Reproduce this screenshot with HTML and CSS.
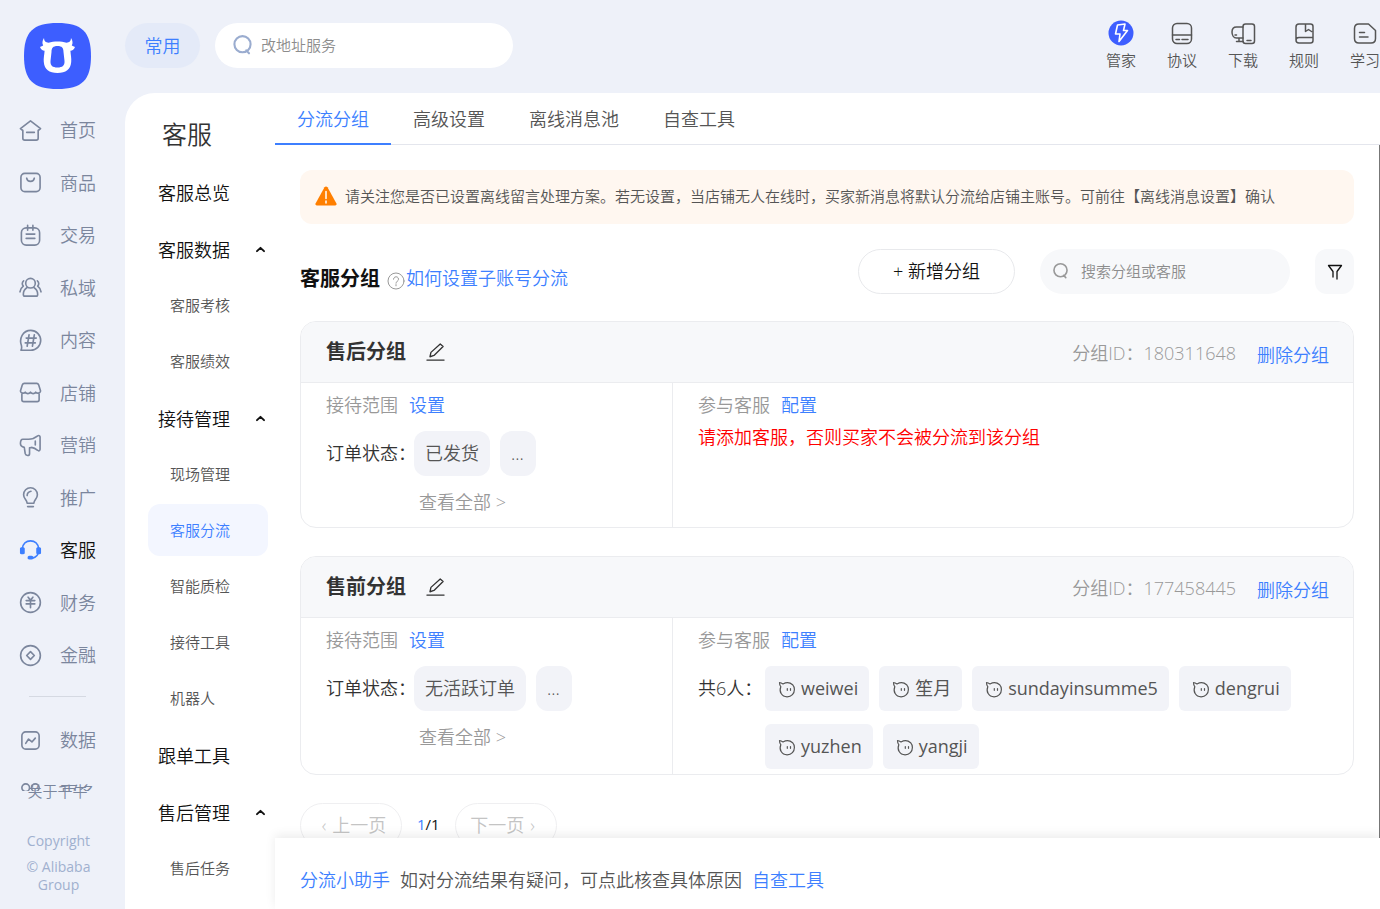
FILE: index.html
```html
<!DOCTYPE html>
<html lang="zh-CN">
<head>
<meta charset="utf-8">
<meta name="viewport" content="width=device-width, initial-scale=1">
<title>客服分流</title>
<link rel="stylesheet" href="styles.css">
</head>
<body>
<svg class="sprite" aria-hidden="true">
  <symbol id="search" viewBox="0 0 20 20"><path d="M10 2a7.6 7.6 0 1 0 0 15.4A7.6 7.6 0 1 0 10 2zM13.6 15.6l2.6 2.8"/></symbol>
  <symbol id="edit" viewBox="0 0 20 20"><path d="M1 18.5h18M4.2 15l1-4.6L15 1.600l3 2.700L8.400 13.600z"/></symbol>
  <symbol id="face" viewBox="0 0 18 18"><path d="M5 3.900C3.800 3.100 2.600 2.600 1.500 2.500c0 1.600.4 3 1.300 4.200-2 4.800.8 10.100 6.300 10.100 4.500 0 7.300-3.300 7.300-7.200 0-2-.7-3.700-1.800-4.900C12 2.300 8 2.200 5 3.900zM9.300 8.500v1.800M12.500 8.500v1.800"/></symbol>
  <symbol id="caret" viewBox="0 0 10 8"><path d="M1.800 5.500 5 2.500l3.200 3"/></symbol>
</svg>
<div class="app">
  <aside class="sidebar">
    <a class="logo" href="#" aria-label="千牛">
      <svg viewBox="0 0 67 66"><path class="logo-bg" d="M33.500 0C58 0 67 9 67 33S58 66 33.500 66 0 57 0 33 9 0 33.500 0z"/><path class="logo-ox" fill-rule="evenodd" d="M20 15c0 3 1.500 4.500 4.500 4.800C30 18 37 18 42.500 19.800 45.500 19.500 47 18 47 15c1.800 2.500 2 5.500.8 7.500L51 24c-.8 2.300-2.500 3.600-4.600 3.700.3 4 1.200 7.300.8 11.300C46.500 46.500 42 50 33.500 50S20.500 46.500 19.800 39c-.4-4 .5-7.300.8-11.300-2.100-.1-3.800-1.400-4.600-3.700l3.200-1.500C18 20.500 18.200 17.500 20 15zM33.500 23c-4.500 0-6 2-6 6l-1 9c-.3 4.500 2 6.500 7 6.500s7.300-2 7-6.500l-1-9c0-4-1.500-6-6-6z"/></svg>
    </a>
    <nav class="nav" aria-label="主导航">
      <a class="nav-item" href="#"><svg class="nav-icon" viewBox="0 0 24 24"><path d="M1.500 10 12 2l10.500 8-2.500 2v8a2 2 0 0 1-2 2H6a2 2 0 0 1-2-2v-8zM8 14h8"/></svg>首页</a>
      <a class="nav-item" href="#"><svg class="nav-icon" viewBox="0 0 24 24"><rect x="2" y="2.500" width="20" height="19" rx="4"/><path d="M8 7.500c.8 4.500 7.200 4.500 8 0"/></svg>商品</a>
      <a class="nav-item" href="#"><svg class="nav-icon" viewBox="0 0 24 24"><rect x="2.500" y="4" width="19" height="18" rx="5"/><path d="M9 1.500v5M14.500 1.500v5M7.500 10.500h9M7.500 15h9"/></svg>交易</a>
      <a class="nav-item" href="#"><svg class="nav-icon" viewBox="0 0 24 24"><circle cx="12" cy="7.500" r="5"/><path d="M8.500 12c-2.500 1.500-4 4-4 7.200 0 1 .6 1.800 1.800 1.800h11.400c1.200 0 1.800-.8 1.800-1.800 0-3.200-1.500-5.700-4-7.200M4.800 5c-1.800 1.500-1.800 4-.3 5.500C2.500 12 1.200 14 1 16.500M19.200 5c1.800 1.500 1.800 4 .3 5.500 2 1.500 3.300 3.500 3.500 6"/></svg>私域</a>
      <a class="nav-item" href="#"><svg class="nav-icon" viewBox="0 0 24 24"><path d="M12.300 1.500a10.300 10.300 0 1 1 0 20.700H2c1-1.500 1-2.500.6-4.700C-.3 10 4 1.500 12.300 1.500zM10.500 6 8.500 18M16 6l-2 12M7.500 9.500H18M6.500 14.500H17"/></svg>内容</a>
      <a class="nav-item" href="#"><svg class="nav-icon" viewBox="0 0 24 24"><path d="M5.500 2.500h13c1 0 1.600.5 2 1.500l2 6.500c-.5 2.500-3.500 2.800-5 1.200-1.500 2-4 2-5.500 0-1.500 2-4 2-5.500 0-1.500 1.600-4.500 1.300-5-1.200l2-6.500c.4-1 1-1.500 2-1.500zM3 12.500v7c0 1.500.7 2 2 2h14c1.300 0 2-.5 2-2v-7"/></svg>店铺</a>
      <a class="nav-item" href="#"><svg class="nav-icon" viewBox="0 0 24 24"><path d="M4 5.500h6c4 0 7-1.500 9.500-3.500 1-.8 2.500-.3 2.500 1v13c0 1.500-1.500 2-2.500 1-2-1.500-4-2.500-6.500-3l-2 .5v6c0 2.500-4 2.500-4.500 0l-1-6.500C3 13.500 1.500 12 1.500 10S2 5.500 4 5.500zM17 7.500v4"/></svg>营销</a>
      <a class="nav-item" href="#"><svg class="nav-icon" viewBox="0 0 24 24"><path d="M8.500 18c0-3.500-3.700-4.500-3.700-9a7.200 7.200 0 0 1 14.400 0c0 4.500-3.700 5.500-3.700 9zM8.500 10c0-2.500 1.500-4 4-4.500M9 21.500h6"/></svg>推广</a>
      <a class="nav-item is-active" href="#" aria-current="page"><svg class="nav-icon" viewBox="0 0 24 24"><path d="M3.500 10C4 5 7.500 2 12 2s8 3 8.500 8v3c-.5 4-3 6.300-6.500 7"/><path class="solid" d="M1 10c0-2 5-2 5 0v4.500c0 2-5 2-5 0zM18 10c0-2 5-2 5 0v4.500c0 2-5 2-5 0zM9 19c0-2 6-2 6 0v1c0 2-6 2-6 0z"/></svg>客服</a>
      <a class="nav-item" href="#"><svg class="nav-icon" viewBox="0 0 24 24"><circle cx="12" cy="12" r="10.300"/><path d="m9.500 6.500 2.500 3 2.500-3M7.500 10h9M7.500 13.500h9M12 10v7.500"/></svg>财务</a>
      <a class="nav-item" href="#"><svg class="nav-icon" viewBox="0 0 24 24"><circle cx="12" cy="12" r="10.300"/><path d="m12 8 4 4-4 4-4-4z"/></svg>金融</a>
      <hr class="nav-divider">
      <a class="nav-item" href="#"><svg class="nav-icon" viewBox="0 0 24 24"><rect x="3" y="3" width="18" height="18" rx="4"/><path d="m7 15 3-4.500 3.500 3L17 9.500"/></svg>数据</a>
      <a class="nav-item" href="#"><svg class="nav-icon" viewBox="0 0 24 24"><circle cx="7" cy="7" r="4"/><circle cx="17" cy="7" r="4"/><circle cx="7" cy="17" r="4"/><circle cx="17" cy="17" r="4"/></svg>更多</a>
    </nav>
    <footer class="side-foot">
      <a class="about" href="#">关于千牛</a>
      <p class="copy">Copyright</p>
      <p class="copy">© Alibaba Group</p>
    </footer>
  </aside>

  <header class="topbar">
    <button class="common" type="button">常用</button>
    <label class="search search-top"><svg class="search-icon"><use href="#search"/></svg><input type="text" placeholder="改地址服务" aria-label="搜索服务"></label>
    <nav class="tools" aria-label="工具">
      <a class="tool" href="#"><svg class="tool-icon" viewBox="0 0 26 26"><circle class="disc" cx="13" cy="13" r="12.500"/><path class="bolt" d="m9.500 5 7.500-1-1.500 6.500h4L11 21.500l1-7.500H7.500z"/></svg>管家</a>
      <a class="tool" href="#"><svg class="tool-icon" viewBox="0 0 26 26"><rect x="3.500" y="3.500" width="19" height="20" rx="4.500"/><path d="M3.500 15h19M7 19.500h3.500M13 19.500h6"/></svg>协议</a>
      <a class="tool" href="#"><svg class="tool-icon" viewBox="0 0 26 26"><rect x="13" y="4" width="11.500" height="19.500" rx="2.500"/><path d="M13 7H6.500c-3 0-4.500 2-4.500 5s1.500 6 4.500 6H13M9 18v3M6.500 21.500H13M5 15h1.500M17 20.500h4"/></svg>下载</a>
      <a class="tool" href="#"><svg class="tool-icon" viewBox="0 0 26 26"><path d="M8 4h11.500c1.500 0 2.500 1 2.500 2.500v14c0 1.500-1 2.500-2.500 2.500H8a3 3 0 0 1-3-3V7a3 3 0 0 1 3-3zM5 20c0-1.500 1-2.500 3-2.500h14M14.500 4v7.500l3-2 3 2"/></svg>规则</a>
      <a class="tool" href="#"><svg class="tool-icon" viewBox="0 0 26 26"><path d="M7 4h9.500l7 6.500v8c0 3-1.500 4.500-4.500 4.500H7c-3 0-4.500-1.500-4.500-4.500v-10C2.500 5.500 4 4 7 4zM7.500 12.500h5M7.500 17h8.500"/></svg>学习</a>
    </nav>
  </header>

  <div class="panel">
    <nav class="subnav" aria-label="客服菜单">
      <h1 class="subnav-title">客服</h1>
      <a class="sub-head" href="#">客服总览</a>
      <button class="sub-head" type="button">客服数据<svg class="caret"><use href="#caret"/></svg></button>
      <a class="sub-item" href="#">客服考核</a>
      <a class="sub-item" href="#">客服绩效</a>
      <button class="sub-head" type="button">接待管理<svg class="caret"><use href="#caret"/></svg></button>
      <a class="sub-item" href="#">现场管理</a>
      <a class="sub-item is-current" href="#" aria-current="page">客服分流</a>
      <a class="sub-item" href="#">智能质检</a>
      <a class="sub-item" href="#">接待工具</a>
      <a class="sub-item" href="#">机器人</a>
      <a class="sub-head" href="#">跟单工具</a>
      <button class="sub-head" type="button">售后管理<svg class="caret"><use href="#caret"/></svg></button>
      <a class="sub-item" href="#">售后任务</a>
    </nav>

    <div class="content">
      <div class="tabs" role="tablist">
        <button class="tab is-selected" role="tab" aria-selected="true" type="button">分流分组</button>
        <button class="tab" role="tab" aria-selected="false" type="button">高级设置</button>
        <button class="tab" role="tab" aria-selected="false" type="button">离线消息池</button>
        <button class="tab" role="tab" aria-selected="false" type="button">自查工具</button>
      </div>
      <main class="scroll">
        <div class="notice" role="alert">
          <svg class="notice-icon" viewBox="0 0 22 20"><path class="tri" d="M9.500 1.200c.7-1 2.300-1 3 0l8.800 16c.7 1.300 0 2.300-1.300 2.300H2c-1.300 0-2-1-1.300-2.300z"/><path class="mark" d="M11 5.500v7M11 15v2"/></svg>
          <span>请关注您是否已设置离线留言处理方案。若无设置，当店铺无人在线时，买家新消息将默认分流给店铺主账号。可前往【离线消息设置】确认</span>
        </div>

        <div class="toolbar">
          <h2 class="heading">客服分组</h2>
          <svg class="help" viewBox="0 0 18 18"><circle cx="9" cy="9" r="8"/><path d="M6.500 7.200c0-3.300 5-3.300 5 0 0 2-2.500 2-2.500 4M9 12.600v1.200"/></svg>
          <a class="link how" href="#">如何设置子账号分流</a>
          <div class="actions">
            <button class="add" type="button">+ 新增分组</button>
            <label class="search search-group"><svg class="search-icon"><use href="#search"/></svg><input type="text" placeholder="搜索分组或客服" aria-label="搜索分组或客服"></label>
            <button class="filter" type="button" aria-label="筛选"><svg viewBox="0 0 16 16"><path d="M1.500 1.500h13L10 7.500V15M1.500 1.500l4.500 6v5.500"/></svg></button>
          </div>
        </div>

        <section class="card">
          <header class="card-head">
            <h3 class="card-title">售后分组</h3>
            <button class="edit" type="button" aria-label="编辑"><svg><use href="#edit"/></svg></button>
            <span class="group-id">分组ID：180311648</span>
            <a class="link" href="#">删除分组</a>
          </header>
          <div class="card-body">
            <div class="scope">
              <p class="row-label">接待范围<a class="link" href="#">设置</a></p>
              <div class="row"><span class="key">订单状态：</span><span class="chip">已发货</span><span class="chip">...</span></div>
              <a class="all" href="#">查看全部 &gt;</a>
            </div>
            <div class="agents">
              <p class="row-label">参与客服<a class="link" href="#">配置</a></p>
              <p class="warn">请添加客服，否则买家不会被分流到该分组</p>
            </div>
          </div>
        </section>

        <section class="card">
          <header class="card-head">
            <h3 class="card-title">售前分组</h3>
            <button class="edit" type="button" aria-label="编辑"><svg><use href="#edit"/></svg></button>
            <span class="group-id">分组ID：177458445</span>
            <a class="link" href="#">删除分组</a>
          </header>
          <div class="card-body">
            <div class="scope">
              <p class="row-label">接待范围<a class="link" href="#">设置</a></p>
              <div class="row"><span class="key">订单状态：</span><span class="chip">无活跃订单</span><span class="chip">...</span></div>
              <a class="all" href="#">查看全部 &gt;</a>
            </div>
            <div class="agents">
              <p class="row-label">参与客服<a class="link" href="#">配置</a></p>
              <div class="row">
                <span class="key key-count">共6人：</span>
                <ul class="people">
                  <li class="person"><svg><use href="#face"/></svg>weiwei</li>
                  <li class="person"><svg><use href="#face"/></svg>笙月</li>
                  <li class="person"><svg><use href="#face"/></svg>sundayinsumme5</li>
                  <li class="person"><svg><use href="#face"/></svg>dengrui</li>
                  <li class="person"><svg><use href="#face"/></svg>yuzhen</li>
                  <li class="person"><svg><use href="#face"/></svg>yangji</li>
                </ul>
              </div>
            </div>
          </div>
        </section>

        <div class="pager">
          <button class="page-btn" type="button" disabled><span class="arrow">‹</span>上一页</button>
          <span class="page-num"><span class="now">1</span>/1</span>
          <button class="page-btn" type="button" disabled>下一页<span class="arrow">›</span></button>
        </div>
      </main>
      <footer class="helper">
        <a class="link" href="#">分流小助手</a>
        <span>如对分流结果有疑问，可点此核查具体原因</span>
        <a class="link" href="#">自查工具</a>
      </footer>
    </div>
  </div>
</div>
</body>
</html>
```

FILE: styles.css
```css
* { box-sizing: border-box; }
body {
  margin: 0;
  font-family: "Open Sans", "Noto Sans CJK SC", sans-serif;
  font-size: 18px;
  font-weight: 350;
  line-height: 24px;
  color: #333;
  background: #eef1f9;
}
h1, h2, h3, p, ul { margin: 0; padding: 0; }
a { color: inherit; text-decoration: none; }
button, input { font: inherit; color: inherit; border: 0; background: none; padding: 0; }
button { cursor: pointer; }
svg { flex: none; fill: none; stroke: currentColor; stroke-linecap: round; stroke-linejoin: round; }
.sprite { position: absolute; width: 0; height: 0; }
.link { color: #3d7fff; }

.app {
  display: grid;
  grid-template: 93px minmax(0, 1fr) / 125px minmax(0, 1fr);
  height: 100vh;
  overflow: hidden;
}

/* Sidebar */
.sidebar { grid-row: 1 / 3; display: flex; flex-direction: column; padding-top: 23px; min-height: 0; }
.logo { margin: 0 0 15px 24px; height: 66px; }
.logo svg { width: 67px; height: 66px; stroke: none; }
.logo-bg { fill: #3d5eff; }
.logo-ox { fill: #fff; }
.nav { flex: 1; min-height: 0; overflow: hidden; }
.nav-item { display: flex; align-items: center; gap: 18px; height: 52px; padding-left: 19px; color: #7b869d; }
.nav-item:nth-child(even) { height: 53px; }
.nav-icon { width: 23px; height: 23px; stroke-width: 1.700; }
.nav-item.is-active { color: #111; }
.is-active .nav-icon { color: #3d7fff; }
.nav-icon .solid { fill: currentColor; stroke: none; }
.nav-divider { width: 57px; height: 1px; margin: 15px 0 17px 29px; border: 0; background: #d5d9e2; }
.side-foot { padding: 0 24px 15px; width: 117px; margin-top: -11px; text-align: center; font-size: 15px; line-height: 18px; }
.about { display: block; line-height: 22px; margin: 0 0 30px -2px; color: #7b869d; }
.copy { color: #a0b0cf; font-weight: 400; font-size: 14px; }
.copy + .copy { margin-top: 8px; }

/* Top bar */
.topbar { display: flex; align-items: flex-start; gap: 15px; min-width: 0; }
.common { margin-top: 23px; width: 75px; height: 45px; border-radius: 23px; background: #e4eaf8; color: #3d7fff; }
.search { display: flex; align-items: center; height: 45px; border-radius: 23px; font-size: 15px; }
.search input { flex: 1; min-width: 0; outline: 0; }
.search input::placeholder { color: #8c8c8c; opacity: 1; }
.search-top { margin-top: 23px; width: 298px; padding: 0 17px 2px; gap: 8px; background: #fff; }
.search-top .search-icon { width: 21px; height: 21px; color: #9aaccf; stroke-width: 2; }
.tools { display: flex; gap: 31px; margin: 20px 0 0 auto; }
.tool { display: flex; flex-direction: column; align-items: center; gap: 2px; font-size: 15px; color: #555; white-space: nowrap; }
.tool-icon { width: 26px; height: 26px; stroke-width: 1.500; }
.tool-icon .disc { fill: #3d5eff; stroke: none; }
.tool-icon .bolt { stroke: #fff; stroke-width: 1.600; }

/* White panel */
.panel { display: flex; min-width: 0; min-height: 0; background: #fff; border-top-left-radius: 30px; overflow: hidden; }
.subnav { flex: none; width: 150px; padding: 23px 7px 0 23px; }
.subnav-title { padding-left: 14px; margin-bottom: 11px; font-size: 25px; font-weight: 350; line-height: 36px; }
.sub-head { display: flex; align-items: center; justify-content: space-between; width: 100%; height: 57px; padding: 2px 2px 0 10px; color: #111; }
.caret { width: 11px; height: 9px; stroke-width: 1.800; }
.sub-item { display: flex; align-items: center; height: 52px; margin: 2px 0; padding-left: 22px; border-radius: 12px; font-size: 15px; color: #555; }
.sub-item + .sub-item { margin-top: 4px; }
.sub-item.is-current { background: #f3f6ff; color: #3d7fff; }

.content { flex: 1; min-width: 0; display: flex; flex-direction: column; }
.tabs { display: flex; height: 52px; border-bottom: 1px solid #e4e6ed; }
.tab { height: 52px; padding: 2px 22px 0; border-bottom: 2px solid transparent; color: #555; }
.tab.is-selected { color: #3d7fff; border-color: #3d7fff; }
.scroll { flex: 1; min-height: 0; overflow: hidden; padding: 25px; border-right: 1px solid #777; }

.notice { display: flex; align-items: center; gap: 8px; min-height: 54px; padding: 0 15px 2px; border-radius: 12px; background: #fff7f0; color: #555; font-size: 15px; }
.notice-icon { width: 22px; height: 20px; }
.notice-icon .tri { fill: #ff7f00; stroke: none; }
.notice-icon .mark { stroke: #fff; stroke-width: 1.500; }

.toolbar { display: flex; align-items: center; margin: 25px 0 27px; }
.heading { padding-top: 14px; font-size: 20px; font-weight: 700; color: #111; }
.help { width: 18px; height: 18px; margin: 18px 1px 0 7px; color: #999; }
.how { padding-top: 13px; }
.actions { display: flex; align-items: center; gap: 25px; margin-left: auto; }
.add { width: 157px; height: 45px; padding-bottom: 2px; border: 1px solid #e8e9ec; border-radius: 23px; color: #111; }
.search-group { width: 250px; padding: 0 12px 2px; gap: 12px; background: #f7f8fa; }
.search-group .search-icon { width: 17px; height: 17px; color: #999; stroke-width: 1.900; }
.filter { display: grid; place-items: center; width: 39px; height: 45px; border-radius: 12px; background: #f7f8fa; color: #111; }
.filter svg { width: 16px; height: 16px; stroke-width: 1.300; }

.card { border: 1px solid #ebecef; border-radius: 16px; overflow: hidden; margin-bottom: 28px; }
.card-head { display: flex; align-items: center; height: 61px; padding: 0 24px 0 25px; background: #f7f8fa; border-bottom: 1px solid #ebecef; }
.card-title { font-size: 20px; font-weight: 700; }
.edit { display: flex; margin-left: 20px; }
.edit svg { width: 19px; height: 20px; stroke-width: 1.400; }
.group-id { margin: 2px 21px 0 auto; color: #999; }
.card-head .link { margin-top: 5px; }
.card-body { display: flex; }
.scope { flex: none; width: 372px; padding: 10px 25px 13px; border-right: 1px solid #ebecef; }
.agents { flex: 1; min-width: 0; padding: 10px 24px 5px 25px; }
.row-label { color: #999; }
.row-label .link { margin-left: 11px; }
.row { display: flex; gap: 10px; margin-top: 14px; }
.key { line-height: 45px; width: 78px; white-space: nowrap; }
.key-count { width: 57px; }
.chip { min-width: 36px; padding: 0 11px; line-height: 45px; border-radius: 12px; background: #f2f3f8; color: #555; }
.all { display: inline-block; margin: 14px 0 0 93px; color: #999; }
.warn { margin-top: 8px; color: #f00; }
.people { flex: 1; display: flex; flex-wrap: wrap; gap: 13px 10px; list-style: none; }
.person { display: flex; align-items: center; gap: 5px; height: 45px; padding: 0 11px 2px 13px; border-radius: 6px; background: #f2f3f8; color: #555; font-weight: 400; }
.person svg { width: 18px; height: 18px; margin-top: 2px; stroke-width: 1.200; }

.pager { display: flex; align-items: center; gap: 15px; }
.page-btn { width: 102px; height: 45px; padding-bottom: 2px; border: 1px solid #efeff1; border-radius: 23px; color: #c4c4c4; }
.arrow { margin: 0 6px; }
.page-num { padding-bottom: 3px; color: #111; font-size: 15px; font-weight: 400; }
.now { color: #3d7fff; }

.helper { position: relative; display: flex; align-items: center; gap: 10px; height: 71px; padding: 12px 25px 0; background: #fff; color: #555; box-shadow: 0 -3px 10px rgba(0, 0, 0, .08); }
```
